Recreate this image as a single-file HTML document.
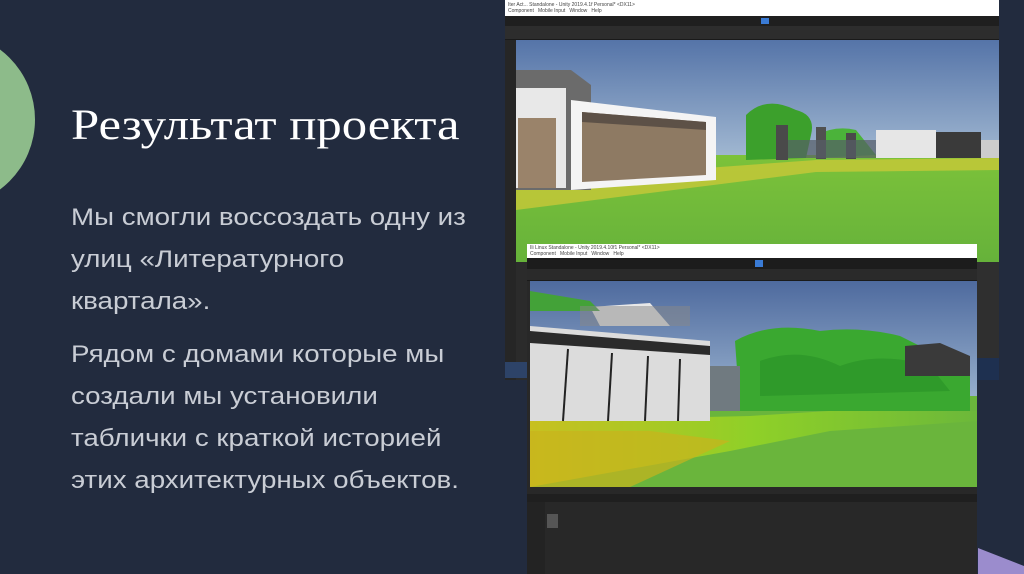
<!DOCTYPE html>
<html><head><meta charset="utf-8"><style>
*{margin:0;padding:0;box-sizing:border-box}
body{width:1024px;height:574px;overflow:hidden;background:#222b3e;position:relative;font-family:"Liberation Sans",sans-serif}
.circ{position:absolute;left:-140px;top:32px;width:175px;height:175px;border-radius:50%;background:#8dbb8a}
h1{position:absolute;left:71px;top:101px;font-family:"Liberation Serif","DejaVu Serif",serif;font-weight:normal;font-size:43px;line-height:50px;color:#fff;white-space:nowrap;transform:scaleX(1.18);transform-origin:0 0}
.p{position:absolute;left:71px;font-size:24px;line-height:42px;color:#c9cdd5;white-space:nowrap;transform:scaleX(1.155);transform-origin:0 0}
.abs{position:absolute}
</style></head><body>
<div class="circ"></div>
<h1>Результат проекта</h1>
<div class="p" style="top:197px">Мы смогли воссоздать одну из<br>улиц «Литературного<br>квартала».</div>
<div class="p" style="top:334px">Рядом с домами которые мы<br>создали мы установили<br>таблички с краткой историей<br>этих архитектурных объектов.</div>

<!-- screenshot 1 -->
<div class="abs" style="left:505px;top:0;width:494px;height:380px;background:#2b2b2b">
 <div class="abs" style="left:0;top:0;width:494px;height:16px;background:#fff;font-size:5px;color:#444;line-height:6px;padding:2px 3px">Iter Act... Standalone - Unity 2019.4.1f Personal* &lt;DX11&gt;<br>Component &nbsp; Mobile Input &nbsp; Window &nbsp; Help</div>
 <div class="abs" style="left:0;top:16px;width:494px;height:10px;background:#1f1f1f"></div>
 <div class="abs" style="left:256px;top:18px;width:8px;height:6px;background:#3a7bd5"></div>
 <div class="abs" style="left:0;top:26px;width:494px;height:14px;background:#2d2d2d;border-bottom:1px solid #1a1a1a"></div>
 <svg class="abs" style="left:11px;top:40px" width="483" height="222" viewBox="0 0 483 222">
  <defs>
   <linearGradient id="s1" x1="0" y1="0" x2="0" y2="1"><stop offset="0" stop-color="#5574a8"/><stop offset="1" stop-color="#a9bfd6"/></linearGradient>
   <linearGradient id="g1" x1="0" y1="0" x2="0" y2="1"><stop offset="0" stop-color="#7cc23a"/><stop offset="1" stop-color="#66b23a"/></linearGradient>
  </defs>
  <rect width="483" height="130" fill="url(#s1)"/>
  <rect y="115" width="483" height="107" fill="url(#g1)"/>
  <path d="M0 150 L190 128 L300 120 L483 118 L483 130 L300 132 L0 170Z" fill="#c8c838" opacity=".8"/>
  <path d="M230 75 Q250 55 280 70 Q300 75 295 95 L290 118 L230 120Z" fill="#3ca02c"/>
  <path d="M300 95 Q320 85 340 90 L360 115 L300 118Z" fill="#4bb33a"/>
  <rect x="260" y="85" width="12" height="35" fill="#4a4a4a"/>
  <rect x="300" y="87" width="10" height="32" fill="#505050"/>
  <rect x="330" y="93" width="10" height="26" fill="#4a4a4a"/>
  <rect x="272" y="100" width="160" height="18" fill="#555d66" opacity=".7"/>
  <rect x="360" y="90" width="60" height="28" fill="#e6e6e6"/>
  <rect x="420" y="92" width="45" height="26" fill="#3a3a3a"/>
  <rect x="465" y="100" width="18" height="18" fill="#ccc"/>
  <path d="M0 30 L55 30 L75 45 L75 150 L0 150Z" fill="#6b6b6b"/>
  <rect x="0" y="48" width="50" height="100" fill="#e8e8e8"/>
  <rect x="2" y="78" width="38" height="70" fill="#9a836a"/>
  <path d="M55 60 L200 77 L200 140 L55 150Z" fill="#f4f4f4"/>
  <path d="M66 72 L190 82 L190 135 L66 142Z" fill="#8e7a63"/>
  <path d="M66 72 L190 82 L190 90 L66 82Z" fill="#5d5147"/>
 </svg>
 <div class="abs" style="left:0;top:40px;width:11px;height:340px;background:#262626"></div>
 <div class="abs" style="left:472px;top:262px;width:22px;height:118px;background:#2f2f2f"></div>
 <div class="abs" style="left:472px;top:358px;width:22px;height:22px;background:#1e3050"></div>
 <div class="abs" style="left:0;top:362px;width:22px;height:16px;background:#2d4368"></div>
</div>

<!-- screenshot 2 -->
<div class="abs" style="left:527px;top:244px;width:450px;height:330px;background:#282828">
 <div class="abs" style="left:0;top:0;width:450px;height:14px;background:#fff;font-size:5px;color:#444;line-height:6px;padding:1px 3px">Ili Linux Standalone - Unity 2019.4.10f1 Personal* &lt;DX11&gt;<br>Component &nbsp; Mobile Input &nbsp; Window &nbsp; Help</div>
 <div class="abs" style="left:0;top:14px;width:450px;height:11px;background:#1c1c1c"></div>
 <div class="abs" style="left:228px;top:16px;width:8px;height:7px;background:#3a7bd5"></div>
 <div class="abs" style="left:0;top:25px;width:450px;height:12px;background:#2a2a2a;border-bottom:1px solid #1a1a1a"></div>
 <svg class="abs" style="left:3px;top:37px" width="447" height="206" viewBox="0 0 447 206">
  <defs>
   <linearGradient id="s2" x1="0" y1="0" x2="0" y2="1"><stop offset="0" stop-color="#4e6a9e"/><stop offset="1" stop-color="#a5bdd6"/></linearGradient>
   <linearGradient id="g2" x1="0" y1="0" x2="1" y2="0"><stop offset="0" stop-color="#c8c020"/><stop offset=".5" stop-color="#8fd028"/><stop offset="1" stop-color="#6cb83a"/></linearGradient>
  </defs>
  <rect width="447" height="140" fill="url(#s2)"/>
  <rect y="115" width="447" height="91" fill="#6ab53c"/>
  <path d="M0 140 L220 135 L330 128 L447 130 L447 140 L300 150 L200 170 L0 206Z" fill="url(#g2)"/>
  <path d="M0 206 L0 150 L120 150 L200 160 L100 206Z" fill="#c9b41c" opacity=".7"/>
  <path d="M205 60 Q240 40 290 50 Q330 45 370 55 L400 70 L440 80 L440 130 L210 130Z" fill="#3aa830"/>
  <path d="M230 80 Q270 65 310 85 Q350 70 400 85 L420 110 L230 115Z" fill="#2f9a2a"/>
  <path d="M375 65 L410 62 L440 75 L440 95 L375 95Z" fill="#3a3a3a"/>
  <path d="M60 26 L120 22 L140 45 L70 45Z" fill="#e8e8e8"/>
  <path d="M0 10 L60 20 L70 30 L0 30Z" fill="#43a238"/>
  <rect x="50" y="25" width="110" height="20" fill="#888" opacity=".5"/>
  <path d="M0 45 L180 60 L180 140 L0 140Z" fill="#dcdcdc"/>
  <path d="M0 50 L180 65 L180 74 L0 62Z" fill="#2b2b2b"/>
  <rect x="180" y="85" width="30" height="45" fill="#707a80"/>
  <g stroke="#222" stroke-width="2"><line x1="38" y1="68" x2="33" y2="140"/><line x1="82" y1="72" x2="78" y2="140"/><line x1="118" y1="75" x2="115" y2="140"/><line x1="150" y1="78" x2="148" y2="140"/></g>
 </svg>
 <div class="abs" style="left:0;top:250px;width:450px;height:8px;background:#1f1f1f"></div>
 <div class="abs" style="left:20px;top:270px;width:11px;height:14px;background:#555"></div>
 <div class="abs" style="left:0;top:258px;width:18px;height:72px;background:#232323"></div>
</div>
<svg class="abs" style="left:970px;top:540px" width="54" height="34"><path d="M8 8 L54 26 L54 34 L8 34Z" fill="#9b8ccd"/></svg>
</body></html>
